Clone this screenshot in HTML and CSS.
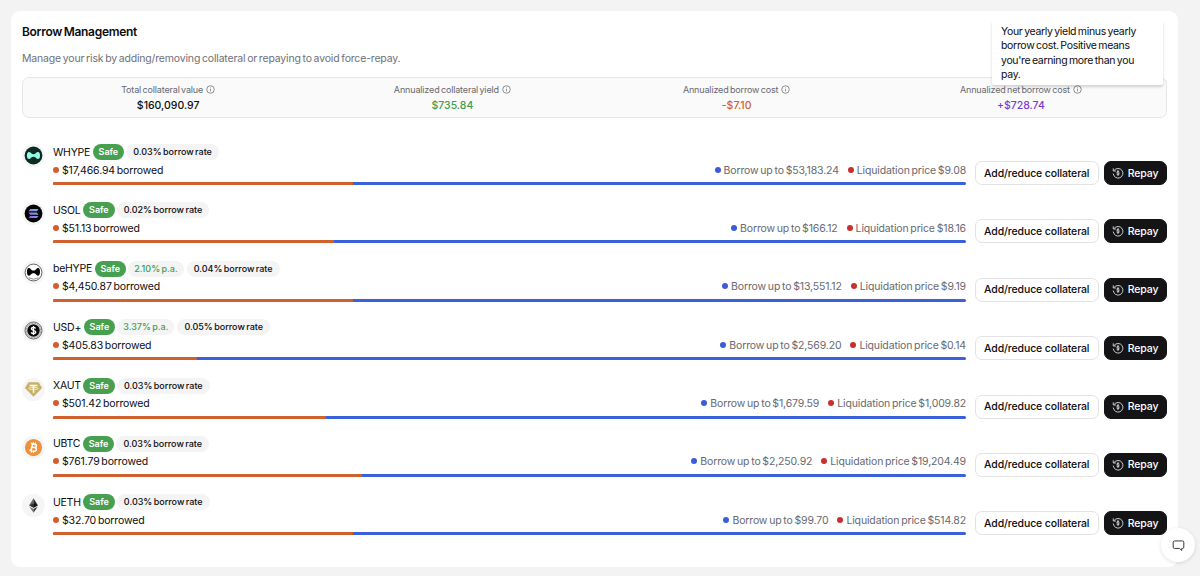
FILE: index.html
```html
<!DOCTYPE html>
<html lang="en">
<head>
  <meta charset="UTF-8" />
  <meta name="viewport" content="width=device-width, initial-scale=1.0" />
  <title>Borrow Management</title>
  <link rel="stylesheet" href="styles.css">
</head>
<body>
  <!-- shared icons -->
  <svg class="sprite" width="0" height="0">
    <symbol id="info" viewBox="0 0 16 16">
      <circle cx="8" cy="8" r="6.7" fill="none" stroke="currentColor" stroke-width="1.3"/>
      <path d="M8 7.2v4M8 4.6v1.2" stroke="currentColor" stroke-width="1.3"/>
    </symbol>
    <symbol id="repay" viewBox="0 0 24 24">
      <path d="M4.500 6.500A9.700 9.700 0 1 1 2.500 14M2.500 3.500v4.500h4.500" fill="none" stroke="currentColor" stroke-width="1.8" stroke-linecap="round" stroke-linejoin="round"/>
      <path d="M14.500 9.800c-.6-.8-1.500-1-2.500-1-1.500 0-2.500.6-2.500 1.600 0 2.300 5.200 1 5.200 3.400 0 1.100-1.200 1.600-2.700 1.600-1.100 0-2-.3-2.600-1M12 7v10" fill="none" stroke="currentColor" stroke-width="1.700" stroke-linecap="round"/>
    </symbol>
  </svg>

  <main class="card">
    <h1>Borrow Management</h1>
    <p class="subtitle">Manage your risk by adding/removing collateral or repaying to avoid force-repay.</p>

    <section class="stats">
      <div class="stat">
        <div class="stat-label">Total collateral value <svg><use href="#info"/></svg></div>
        <div class="stat-value">$160,090.97</div>
      </div>
      <div class="stat">
        <div class="stat-label">Annualized collateral yield <svg><use href="#info"/></svg></div>
        <div class="stat-value green">$735.84</div>
      </div>
      <div class="stat">
        <div class="stat-label">Annualized borrow cost <svg><use href="#info"/></svg></div>
        <div class="stat-value orange">-$7.10</div>
      </div>
      <div class="stat">
        <div class="stat-label">Annualized net borrow cost <svg><use href="#info"/></svg></div>
        <div class="stat-value purple">+$728.74</div>
        <div class="tooltip">Your yearly yield minus yearly<br>borrow cost. Positive means<br>you're earning more than you<br>pay.</div>
      </div>
    </section>

    <section class="positions">
      <div class="position">
        <div class="token">
          <svg viewBox="0 0 24 24"><circle cx="12" cy="12" r="9.300" fill="#0b2b25"/><path d="M6.500 8.500C9 7.700 9.300 10.700 12 10.700s3-3 5.500-2.200c1.800 1.200 1.800 5.800 0 7C15 16.300 14.700 13.300 12 13.300s-3 3-5.500 2.200c-1.800-1.200-1.800-5.800 0-7z" fill="#97fce4"/></svg>
        </div>
        <div class="details">
          <div class="title"><span class="name">WHYPE</span><span class="badge safe">Safe</span><span class="badge">0.03% borrow rate</span></div>
          <div class="amounts">
            <span class="borrowed"><i class="dot"></i>$17,466.94 borrowed</span>
            <span class="limit"><i class="dot blue"></i>Borrow up to $53,183.24</span>
            <span class="limit"><i class="dot red"></i>Liquidation price $9.08</span>
          </div>
          <div class="bar"><div style="width: 32.84%"></div></div>
        </div>
        <div class="actions"><button class="btn">Add/reduce collateral</button><button class="btn dark"><svg><use href="#repay"/></svg>Repay</button></div>
      </div>

      <div class="position">
        <div class="token">
          <svg viewBox="0 0 24 24"><defs><linearGradient id="sol" x1="0" y1="1" x2="1" y2="0"><stop offset="0" stop-color="#a94fe8"/><stop offset="1" stop-color="#5fc5d2"/></linearGradient></defs><circle cx="12" cy="12" r="9.300" fill="#050507"/><path d="M8.500 7.300h8.700l-1.700 2.300H6.800zM6.800 10.900h8.700l1.700 2.300H8.500zM8.500 14.500h8.700l-1.700 2.300H6.800z" fill="url(#sol)"/></svg>
        </div>
        <div class="details">
          <div class="title"><span class="name">USOL</span><span class="badge safe">Safe</span><span class="badge">0.02% borrow rate</span></div>
          <div class="amounts">
            <span class="borrowed"><i class="dot"></i>$51.13 borrowed</span>
            <span class="limit"><i class="dot blue"></i>Borrow up to $166.12</span>
            <span class="limit"><i class="dot red"></i>Liquidation price $18.16</span>
          </div>
          <div class="bar"><div style="width: 30.8%"></div></div>
        </div>
        <div class="actions"><button class="btn">Add/reduce collateral</button><button class="btn dark"><svg><use href="#repay"/></svg>Repay</button></div>
      </div>

      <div class="position">
        <div class="token">
          <svg viewBox="0 0 24 24"><circle cx="12" cy="12" r="8.800" fill="#fff" stroke="#333" stroke-width=".8"/><path d="M6.500 7.300C9 6.500 9 10 12 10s3-3.500 5.500-2.700c1.800 1.400 1.800 6.500 0 7.900C15 16 15 12.700 12 12.700s-3 3.300-5.500 2.500c-1.800-1.400-1.800-6.500 0-7.900z" fill="#080808"/><path d="M7 17.500q5 3 10 0" fill="none" stroke="#555" stroke-width=".7"/></svg>
        </div>
        <div class="details">
          <div class="title"><span class="name">beHYPE</span><span class="badge safe">Safe</span><span class="badge apy">2.10% p.a.</span><span class="badge">0.04% borrow rate</span></div>
          <div class="amounts">
            <span class="borrowed"><i class="dot"></i>$4,450.87 borrowed</span>
            <span class="limit"><i class="dot blue"></i>Borrow up to $13,551.12</span>
            <span class="limit"><i class="dot red"></i>Liquidation price $9.19</span>
          </div>
          <div class="bar"><div style="width: 32.84%"></div></div>
        </div>
        <div class="actions"><button class="btn">Add/reduce collateral</button><button class="btn dark"><svg><use href="#repay"/></svg>Repay</button></div>
      </div>

      <div class="position">
        <div class="token">
          <svg viewBox="0 0 24 24"><circle cx="12" cy="12" r="8.900" fill="#e8e8e8" stroke="#444" stroke-width=".8"/><circle cx="12" cy="12" r="7.600" fill="none" stroke="#777" stroke-width="1" stroke-dasharray="1 .7"/><circle cx="12" cy="12" r="6.500" fill="#0a0a0a"/><path d="M14.200 9.900c-.6-1-1.300-1.100-2.200-1.100-1.300 0-2.200.5-2.200 1.500 0 2.100 4.500 1 4.500 3.300 0 1-1 1.600-2.300 1.600-1.100 0-2-.4-2.400-1.200M12 7.300v9.500" fill="none" stroke="#fff" stroke-width="1.400"/></svg>
        </div>
        <div class="details">
          <div class="title"><span class="name">USD+</span><span class="badge safe">Safe</span><span class="badge apy">3.37% p.a.</span><span class="badge">0.05% borrow rate</span></div>
          <div class="amounts">
            <span class="borrowed"><i class="dot"></i>$405.83 borrowed</span>
            <span class="limit"><i class="dot blue"></i>Borrow up to $2,569.20</span>
            <span class="limit"><i class="dot red"></i>Liquidation price $0.14</span>
          </div>
          <div class="bar"><div style="width: 15.8%"></div></div>
        </div>
        <div class="actions"><button class="btn">Add/reduce collateral</button><button class="btn dark"><svg><use href="#repay"/></svg>Repay</button></div>
      </div>

      <div class="position">
        <div class="token">
          <svg viewBox="0 0 24 24"><path d="M6.700 4.500h10.600l3.700 6L12 19.500l-9-9z" fill="#c9b268"/><path d="M8 7.800h8M12 7.800v7.500" stroke="#fff" stroke-width="1.600"/><ellipse cx="12" cy="10.900" rx="5" ry="1.200" fill="none" stroke="#fff" stroke-width=".7"/></svg>
        </div>
        <div class="details">
          <div class="title"><span class="name">XAUT</span><span class="badge safe">Safe</span><span class="badge">0.03% borrow rate</span></div>
          <div class="amounts">
            <span class="borrowed"><i class="dot"></i>$501.42 borrowed</span>
            <span class="limit"><i class="dot blue"></i>Borrow up to $1,679.59</span>
            <span class="limit"><i class="dot red"></i>Liquidation price $1,009.82</span>
          </div>
          <div class="bar"><div style="width: 29.85%"></div></div>
        </div>
        <div class="actions"><button class="btn">Add/reduce collateral</button><button class="btn dark"><svg><use href="#repay"/></svg>Repay</button></div>
      </div>

      <div class="position">
        <div class="token">
          <svg viewBox="0 0 24 24"><circle cx="12" cy="12" r="9" fill="#ee9139"/><g transform="rotate(12 12 12)" fill="none" stroke="#fff" stroke-width="1.600"><path d="M8.500 8.300h4.200c2.700 0 2.700 3.500 0 3.500h-2.500 3c2.900 0 2.900 3.900 0 3.900H8.500M10.200 8.300v7.400"/><path d="M10.800 6.400v2M13 6.400v2M10.800 15.700v2M13 15.700v2" stroke-width="1.100"/></g></svg>
        </div>
        <div class="details">
          <div class="title"><span class="name">UBTC</span><span class="badge safe">Safe</span><span class="badge">0.03% borrow rate</span></div>
          <div class="amounts">
            <span class="borrowed"><i class="dot"></i>$761.79 borrowed</span>
            <span class="limit"><i class="dot blue"></i>Borrow up to $2,250.92</span>
            <span class="limit"><i class="dot red"></i>Liquidation price $19,204.49</span>
          </div>
          <div class="bar"><div style="width: 33.84%"></div></div>
        </div>
        <div class="actions"><button class="btn">Add/reduce collateral</button><button class="btn dark"><svg><use href="#repay"/></svg>Repay</button></div>
      </div>

      <div class="position">
        <div class="token">
          <svg viewBox="0 0 24 24"><path d="M12 4.500v9.900l-4.500-2.600z" fill="#666"/><path d="M12 4.500v9.900l4.500-2.600z" fill="#292929"/><path d="M7.500 13.100L12 15.700V19.500z" fill="#777"/><path d="M16.500 13.100L12 15.700V19.500z" fill="#333"/><path d="M12 9.800v4.600l-4.500-2.600z" fill="#333"/><path d="M12 9.800v4.600l4.500-2.600z" fill="#111"/></svg>
        </div>
        <div class="details">
          <div class="title"><span class="name">UETH</span><span class="badge safe">Safe</span><span class="badge">0.03% borrow rate</span></div>
          <div class="amounts">
            <span class="borrowed"><i class="dot"></i>$32.70 borrowed</span>
            <span class="limit"><i class="dot blue"></i>Borrow up to $99.70</span>
            <span class="limit"><i class="dot red"></i>Liquidation price $514.82</span>
          </div>
          <div class="bar"><div style="width: 32.84%"></div></div>
        </div>
        <div class="actions"><button class="btn">Add/reduce collateral</button><button class="btn dark"><svg><use href="#repay"/></svg>Repay</button></div>
      </div>
    </section>
  </main>

  <button class="chat" aria-label="Chat">
    <svg viewBox="0 0 12 12"><path d="M2.300 1.800h7.400a1.200 1.200 0 0 1 1.200 1.200v4.500a1.200 1.200 0 0 1-1.200 1.200H9v1.900L6.900 8.700H2.300a1.200 1.200 0 0 1-1.200-1.200V3a1.200 1.200 0 0 1 1.200-1.200z" fill="none" stroke="#333" stroke-width=".9" stroke-linejoin="round"/></svg>
  </button>
</body>
</html>
```
FILE: styles.css
```css
* {
  box-sizing: border-box;
}
body {
  margin: 0;
  padding: 11px 22px 9px 11px;
  height: 576px;
  background: #f3f3f3;
  color: #0c0c0e;
  font-family: Inter, sans-serif;
  word-spacing: -1px;
  overflow: hidden;
}
.sprite {
  position: absolute;
}
.card {
  height: 556px;
  padding: 12px 11px;
  background: #fff;
  border-radius: 9px;
}
h1 {
  margin: 0;
  font-size: 12px;
  line-height: 18px;
  font-weight: 600;
  letter-spacing: -0.3px;
}
.subtitle {
  margin: 9px 0 10px;
  font-size: 10.5px;
  line-height: 17px;
  letter-spacing: -0.17px;
  color: #707078;
}
.stats {
  display: grid;
  grid-template-columns: repeat(4, 1fr);
  height: 41px;
  padding: 4px 3px;
  background: #fafafa;
  border: 1px solid #e6e6e8;
  border-radius: 7px;
}
.stat {
  position: relative;
  text-align: center;
}
.stat-label {
  display: flex;
  justify-content: center;
  align-items: center;
  gap: 3px;
  height: 15px;
  font-size: 9px;
  letter-spacing: -0.15px;
  white-space: nowrap;
  color: #68686f;
}
.stat-label svg {
  width: 9px;
  height: 9px;
}
.stat-value {
  font-size: 10.5px;
  line-height: 17px;
  font-weight: 500;
}
.green {
  color: #429d4c;
}
.orange {
  color: #d35d2e;
}
.purple {
  color: #7c3bd6;
}
.tooltip {
  position: absolute;
  right: 0;
  bottom: 29px;
  width: 171px;
  height: 65px;
  padding: 5px 9px;
  background: #fff;
  border-radius: 2px;
  box-shadow: 0 2px 3px rgba(0, 0, 0, 0.16);
  font-size: 10.5px;
  line-height: 14.3px;
  letter-spacing: -0.32px;
  text-align: left;
  white-space: nowrap;
}
.positions {
  display: flex;
  flex-direction: column;
  gap: 16.9px;
  margin-top: 26px;
}
.position {
  display: flex;
  height: 41.5px;
}
.token {
  width: 23px;
  height: 23px;
  margin-right: 8px;
  background: #f5f5f6;
  border-radius: 50%;
}
.token svg {
  display: block;
  width: 23px;
  height: 23px;
}
.details {
  flex: 1;
}
.title {
  display: flex;
  align-items: center;
  height: 16px;
}
.name {
  margin-right: 2.5px;
  font-size: 10.5px;
  letter-spacing: -0.25px;
}
.badge {
  height: 16px;
  margin-right: 2px;
  padding: 0 7px;
  border-radius: 8px;
  background: #f4f4f5;
  font-size: 9px;
  line-height: 16px;
  font-weight: 500;
  letter-spacing: 0;
}
.safe {
  padding: 0 6px;
  background: #46a04f;
  color: #fff;
  font-weight: 600;
}
.apy {
  margin-right: 3px;
  padding: 0 6px;
  color: #429d4c;
}
.amounts {
  display: flex;
  gap: 9px;
  height: 15px;
  margin-top: 2.500px;
  font-size: 10.5px;
  line-height: 15px;
  letter-spacing: -0.14px;
}
.borrowed {
  margin-right: auto;
}
.limit {
  color: #68686f;
}
.dot {
  display: inline-block;
  width: 6px;
  height: 6px;
  margin-right: 3px;
  border-radius: 50%;
  background: #d65c2b;
  vertical-align: 1px;
}
.dot.blue {
  background: #3a5cdc;
}
.dot.red {
  background: #c9302c;
}
.bar {
  height: 3px;
  margin-top: 4.5px;
  border-radius: 2px;
  background: #3a61da;
  overflow: hidden;
}
.bar div {
  height: 3px;
  background: #d1602f;
}
.actions {
  display: flex;
  gap: 5px;
  align-items: flex-end;
  margin-left: 9px;
  margin-right: 0.5px;
  padding-bottom: 0.5px;
}
.btn {
  display: flex;
  justify-content: center;
  align-items: center;
  width: 123.5px;
  height: 24px;
  padding: 0;
  background: #fff;
  border: 1px solid #e2e2e4;
  border-radius: 7px;
  color: #0c0c0e;
  font: 500 10.5px Inter, sans-serif;
  letter-spacing: -0.13px;
  white-space: nowrap;
}
.btn.dark {
  gap: 4px;
  width: 63px;
  background: #141416;
  border-color: #141416;
  color: #fff;
}
.btn svg {
  width: 12px;
  height: 12px;
  color: #ddd;
}
.chat {
  position: fixed;
  left: 1161px;
  top: 528px;
  display: flex;
  justify-content: center;
  align-items: center;
  width: 34px;
  height: 34px;
  padding: 0;
  background: #fff;
  border: 0;
  border-radius: 50%;
  box-shadow: 0 1px 4px rgba(0, 0, 0, 0.12);
}
.chat svg {
  width: 13px;
  height: 13px;
}
```
